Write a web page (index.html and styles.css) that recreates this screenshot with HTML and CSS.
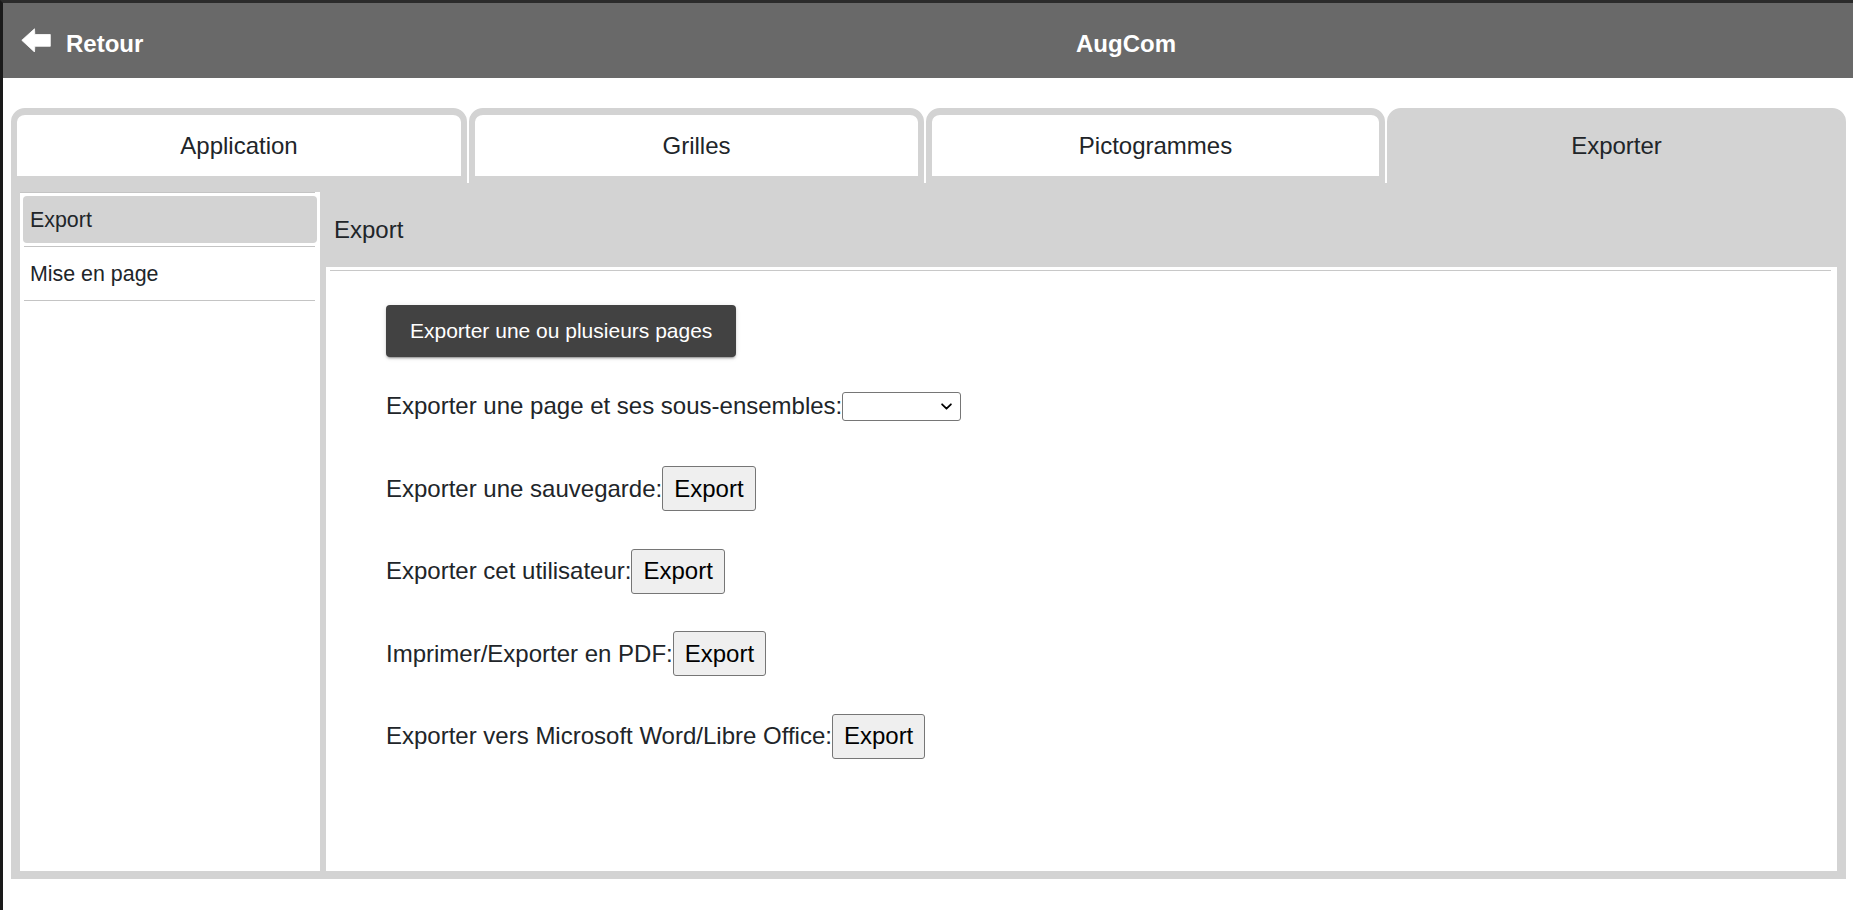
FILE: index.html
```html
<!DOCTYPE html>
<html lang="fr">
<head>
<meta charset="utf-8">
<title>AugCom</title>
<link rel="stylesheet" href="styles.css">
</head>
<body>
<header class="topbar">
  <div class="back">
    <svg class="back-icon" viewBox="0 0 30 24" aria-hidden="true">
      <polygon points="0.8,12.3 13.5,0.8 13.8,6.5 29.3,6.5 29.3,18.3 13.8,18.3 13.5,24" fill="#fff" stroke="#fff" stroke-width="0.8" stroke-linejoin="round"/>
    </svg>
    <span class="back-label">Retour</span>
  </div>
  <div class="title">AugCom</div>
</header>

<div class="settings">
  <nav class="tabs">
    <div class="tab">Application</div>
    <div class="tab">Grilles</div>
    <div class="tab">Pictogrammes</div>
    <div class="tab active">Exporter</div>
  </nav>
  <div class="panel">
    <aside class="sidebar">
      <ul class="side-list">
        <li class="side-item active"><span class="side-link">Export</span></li>
        <li class="side-item"><span class="side-link">Mise en page</span></li>
      </ul>
    </aside>
    <section class="main">
      <h2 class="main-title">Export</h2>
      <div class="main-body">
        <hr class="divider">
        <div class="export-content">
          <button class="raised-btn">Exporter une ou plusieurs pages</button>
          <div class="rows">
            <div class="row"><span>Exporter une page et ses sous-ensembles:</span><span class="select-wrap"><select class="page-select"></select><svg class="select-arrow" viewBox="0 0 10 6" aria-hidden="true"><polyline points="1,1 5,5 9,1" fill="none" stroke="#000" stroke-width="1.6" stroke-linecap="round" stroke-linejoin="round"/></svg></span></div>
            <div class="row"><span>Exporter une sauvegarde:</span><button class="export-btn">Export</button></div>
            <div class="row"><span>Exporter cet utilisateur:</span><button class="export-btn">Export</button></div>
            <div class="row"><span>Imprimer/Exporter en PDF:</span><button class="export-btn">Export</button></div>
            <div class="row"><span>Exporter vers Microsoft Word/Libre Office:</span><button class="export-btn">Export</button></div>
          </div>
        </div>
      </div>
    </section>
  </div>
</div>
</body>
</html>
```

FILE: styles.css
```css
html, body {
  margin: 0;
  padding: 0;
}

body {
  box-sizing: border-box;
  height: 910px;
  overflow: hidden;
  background: #fff;
  border-top: 3px solid #2b2b2b;
  border-left: 3px solid #1a1a1a;
  font-family: "Liberation Sans", Arial, sans-serif;
  color: #212529;
}

.topbar {
  box-sizing: border-box;
  height: 75px;
  padding-top: 6px;
  display: flex;
  align-items: center;
  background: #696969;
  color: #fff;
  font-weight: bold;
  font-size: 24px;
}

.back {
  box-sizing: border-box;
  width: 396px;
  padding-left: 18px;
  display: flex;
  align-items: center;
}

.back-icon {
  flex: none;
  width: 30px;
  height: 24px;
  margin-right: 15px;
  margin-bottom: 8px;
}

.title {
  flex: 1;
  text-align: center;
}

.settings {
  margin: 30px 7px 0 8px;
}

.tabs {
  display: grid;
  grid-template-columns: 456px 455px 459px 1fr;
  gap: 2px;
}

.tab {
  box-sizing: border-box;
  height: 75px;
  border: solid #d3d3d3;
  border-width: 7px 6px 7px 6px;
  border-radius: 14px 14px 0 0;
  background: #fff;
  display: flex;
  align-items: center;
  justify-content: center;
  font-size: 24px;
}

.tab.active {
  background: #d3d3d3;
}

.panel {
  box-sizing: border-box;
  height: 696px;
  padding: 9px 9px 8px 9px;
  display: flex;
  gap: 6px;
  background: #d3d3d3;
}

.sidebar {
  flex: none;
  width: 300px;
  background: #fff;
}

.side-list {
  list-style: none;
  margin: 0;
  padding: 0;
  width: 295px;
  border-top: 1px solid #c4c4c4;
}

.side-item {
  margin-left: 4px;
  padding: 3px 0;
  border-bottom: 1px solid #c4c4c4;
}

.side-link {
  display: block;
  height: 46px;
  padding-top: 1px;
  line-height: 47px;
  margin: 0 -2px 0 -1px;
  padding-left: 7px;
  border-radius: 4px;
  font-size: 21.4px;
}

.side-item.active .side-link {
  background: #d3d3d3;
}

.main {
  flex: 1;
  display: flex;
  flex-direction: column;
}

.main-title {
  margin: 0;
  height: 75px;
  line-height: 75px;
  padding-left: 8px;
  font-size: 24px;
  font-weight: normal;
}

.main-body {
  flex: 1;
  background: #fff;
  padding: 3px 6px 0 4px;
}

.divider {
  margin: 0;
  border: 0;
  border-top: 1px solid #c8c8c8;
}

.export-content {
  padding: 34px 0 0 56px;
}

.raised-btn {
  display: block;
  height: 52px;
  padding: 0 24px;
  margin-bottom: 26px;
  background: #424242;
  color: #fff;
  border: 0;
  border-radius: 4px;
  font-family: "Liberation Sans", Arial, sans-serif;
  font-size: 21px;
  box-shadow: 0 3px 1px -2px rgba(0,0,0,.2), 0 2px 2px 0 rgba(0,0,0,.14), 0 1px 5px 0 rgba(0,0,0,.12);
}

.rows {
  display: flex;
  flex-direction: column;
  gap: 36.6px;
}

.row {
  height: 46px;
  display: flex;
  align-items: center;
  font-size: 24px;
}

.export-btn {
  height: 45px;
  padding: 0 11px;
  background: #efefef;
  color: #000;
  border: 1px solid #767676;
  border-radius: 3px;
  font-family: "Liberation Sans", Arial, sans-serif;
  font-size: 24px;
}

.select-wrap {
  position: relative;
  display: flex;
}

.page-select {
  appearance: none;
  -webkit-appearance: none;
  box-sizing: border-box;
  width: 119px;
  height: 29px;
  margin: 0;
  font-size: 16px;
  background: #fff;
  border: 1px solid #767676;
  border-radius: 3px;
}

.select-arrow {
  position: absolute;
  right: 9px;
  top: 11px;
  width: 11px;
  height: 7px;
  pointer-events: none;
}
```
